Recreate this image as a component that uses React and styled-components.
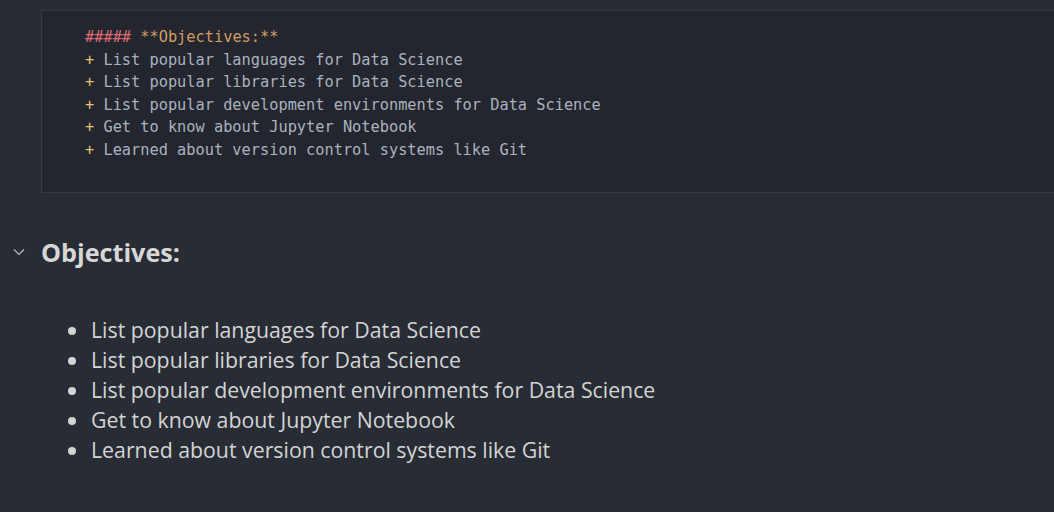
import React from "react";
import styled, { createGlobalStyle } from "styled-components";

const Global = createGlobalStyle`
  html, body { margin: 0; padding: 0; background: #282c34; }
  body { width: 1054px; height: 512px; overflow: hidden; }
`;

const Page = styled.div`
  width: 1054px;
  height: 512px;
  background: #282c34;
  padding-top: 10px;
  box-sizing: border-box;
  overflow: hidden;
`;

const CodeCell = styled.div`
  margin-left: 41px;
  width: 1040px;
  height: 183px;
  box-sizing: border-box;
  background: #23262e;
  border: 1px solid #353944;
  border-right: none;
  padding: 15px 0 0 43px;
`;

const CodeLine = styled.div`
  font-family: "DejaVu Sans Mono", monospace;
  font-size: 15.3px;
  line-height: 22.5px;
  color: #abb2bf;
  white-space: pre;
`;

const Tok = styled.span`
  color: ${(p) => p.$c};
`;

const Heading = styled.div`
  display: flex;
  align-items: center;
  margin-top: 42px;
  height: 34px;
`;

const Chevron = styled.div`
  width: 41px;
  display: flex;
  justify-content: center;
  padding-right: 4px;
  box-sizing: border-box;
`;

const Title = styled.h2`
  margin: 0;
  font-family: "Open Sans", sans-serif;
  font-weight: 700;
  font-size: 25.2px;
  color: #d7d7d7;
`;

const List = styled.ul`
  margin: 46px 0 0 0;
  padding: 0 0 0 91px;
  list-style: none;
`;

const Item = styled.li`
  position: relative;
  font-family: "Open Sans", sans-serif;
  font-size: 21.3px;
  line-height: 30px;
  color: #d4d4d4;
  &::before {
    content: "";
    position: absolute;
    left: -23px;
    top: 12px;
    width: 8px;
    height: 8px;
    border-radius: 50%;
    background: #d4d4d4;
  }
`;

const lines = [
  "List popular languages for Data Science",
  "List popular libraries for Data Science",
  "List popular development environments for Data Science",
  "Get to know about Jupyter Notebook",
  "Learned about version control systems like Git",
];

export default function App() {
  return (
    <Page>
      <Global />
      <CodeCell>
        <CodeLine>
          <Tok $c="#e06c75">#####</Tok> <Tok $c="#d19a66">**Objectives:**</Tok>
        </CodeLine>
        {lines.map((l) => (
          <CodeLine key={l}>
            <Tok $c="#e5c07b">+</Tok> {l}
          </CodeLine>
        ))}
      </CodeCell>
      <Heading>
        <Chevron>
          <svg width="16" height="12" viewBox="0 0 16 12">
            <path d="M3 3.5 L8 8.5 L13 3.5" fill="none" stroke="#b8bcc4" strokeWidth="1.2" />
          </svg>
        </Chevron>
        <Title>Objectives:</Title>
      </Heading>
      <List>
        {lines.map((l) => (
          <Item key={l}>{l}</Item>
        ))}
      </List>
    </Page>
  );
}
